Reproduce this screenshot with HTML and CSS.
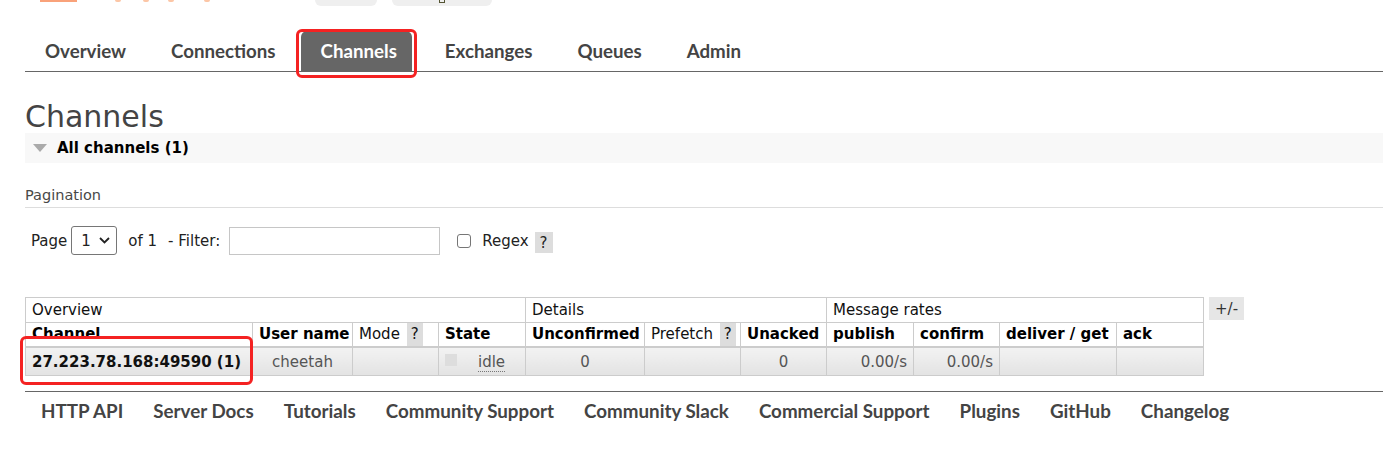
FILE: index.html
```html
<!DOCTYPE html>
<html>
<head>
<meta charset="utf-8">
<title>Channels</title>
<link rel="stylesheet" href="styles.css">
</head>
<body>
<div class="topstrip">
  <span class="logo-bit"></span>
  <span class="dot d1"></span>
  <span class="dot d2"></span>
  <span class="dot d3"></span>
  <span class="dot d4"></span>
  <span class="pill p1"></span>
  <span class="pill p2"><span class="glyph"></span></span>
</div>
<div class="page">
  <nav class="tabs">
    <a class="tab">Overview</a>
    <a class="tab">Connections</a>
    <span class="tab-wrap"><a class="tab active">Channels</a><span class="mark mark-tab"></span></span>
    <a class="tab">Exchanges</a>
    <a class="tab">Queues</a>
    <a class="tab">Admin</a>
  </nav>

  <h1>Channels</h1>

  <div class="section-bar"><span class="tri"></span><span class="section-title">All channels (1)</span></div>

  <div class="pag-label">Pagination</div>

  <div class="pag-row">
    <span class="lbl-page">Page</span>
    <span class="fake-select"><span class="sel-val">1</span><svg class="chev" width="11" height="7" viewBox="0 0 11 7"><path d="M1 1 L5.5 5.5 L10 1" fill="none" stroke="#222" stroke-width="1.8"/></svg></span>
    <span class="lbl-of">of 1</span>
    <span class="lbl-filter">- Filter:</span>
    <input class="filter" type="text">
    <span class="checkbox"></span>
    <span class="lbl-regex">Regex</span>
    <span class="help">?</span>
  </div>

  <div class="table-row">
    <div class="table-wrap">
      <table class="list">
        <colgroup>
          <col class="w-channel"><col class="w-user"><col class="w-mode"><col class="w-state">
          <col class="w-unconf"><col class="w-prefetch"><col class="w-unacked">
          <col class="w-publish"><col class="w-confirm"><col class="w-deliver"><col class="w-ack">
        </colgroup>
        <thead>
          <tr class="groups">
            <th colspan="4">Overview</th>
            <th colspan="3">Details</th>
            <th colspan="4">Message rates</th>
          </tr>
          <tr class="heads">
            <th>Channel</th>
            <th>User name</th>
            <th class="plain">Mode <span class="qhelp">?</span></th>
            <th>State</th>
            <th>Unconfirmed</th>
            <th class="plain">Prefetch <span class="qhelp">?</span></th>
            <th>Unacked</th>
            <th>publish</th>
            <th>confirm</th>
            <th>deliver / get</th>
            <th>ack</th>
          </tr>
        </thead>
        <tbody>
          <tr class="data">
            <td class="chan">27.223.78.168:49590 (1)</td>
            <td class="c">cheetah</td>
            <td></td>
            <td class="state"><span class="state-box"></span><span class="idle">idle</span></td>
            <td class="c">0</td>
            <td></td>
            <td class="c">0</td>
            <td class="r">0.00/s</td>
            <td class="r">0.00/s</td>
            <td></td>
            <td></td>
          </tr>
        </tbody>
      </table>
      <span class="mark mark-chan"></span>
    </div>
    <span class="plusminus">+/-</span>
  </div>

  <footer class="foot">
    <a>HTTP API</a>
    <a>Server Docs</a>
    <a>Tutorials</a>
    <a>Community Support</a>
    <a>Community Slack</a>
    <a>Commercial Support</a>
    <a>Plugins</a>
    <a>GitHub</a>
    <a>Changelog</a>
  </footer>
</div>
</body>
</html>
```

FILE: styles.css
```css
html, body {
  margin: 0;
  padding: 0;
  background: #fff;
}
body {
  font-family: "DejaVu Sans", Verdana, sans-serif;
  font-size: 15px;
  color: #333;
  overflow: hidden;
}

/* cut-off header strip */
.topstrip {
  display: flex;
  align-items: flex-start;
  height: 6px;
  overflow: hidden;
}
.logo-bit {
  margin-left: 40px;
  width: 37px;
  height: 2px;
  background: #f9a27a;
}
.dot {
  width: 6px;
  height: 2px;
  border-radius: 0 0 3px 3px;
  background: #fcc6a6;
}
.d1 { margin-left: 38px; }
.d2 { margin-left: 22px; }
.d3 { margin-left: 19px; }
.d4 { margin-left: 30px; }
.pill {
  height: 6px;
  background: #efefef;
  border-radius: 0 0 6px 6px;
}
.p1 { margin-left: 105px; width: 62px; }
.p2 { margin-left: 15px; width: 100px; position: relative; }
.glyph {
  position: absolute;
  left: 47px;
  top: 0;
  width: 4px;
  height: 2px;
  border: 1px solid #553;
  border-top: none;
}

.page {
  padding-left: 25px;
}

/* tabs */
.tabs {
  margin-top: 25px;
  display: flex;
  gap: 5px;
  height: 40px;
  border-bottom: 1px solid #666;
  font-family: Lato, "DejaVu Sans", sans-serif;
  font-weight: 700;
  font-size: 18.7px;
}
.tab {
  display: flex;
  align-items: center;
  padding: 0 20px;
  color: #444;
  text-decoration: none;
  border-radius: 6px 6px 0 0;
}
.tab-wrap {
  position: relative;
  display: flex;
}
.tab.active {
  background: #666;
  color: #fff;
  padding-right: 15px;
  margin-right: 8px;
}
.mark {
  position: absolute;
  border: 3px solid #f42222;
  border-radius: 6px;
  box-sizing: border-box;
  pointer-events: none;
}
.mark-tab {
  left: -5px;
  top: -2px;
  width: 121px;
  height: 49px;
}

h1 {
  margin: 28px 0 0;
  font-size: 30px;
  line-height: 33px;
  font-weight: normal;
  color: #444;
}

.section-bar {
  height: 30px;
  background: #f8f8f8;
  display: flex;
  align-items: center;
}
.tri {
  margin-left: 8px;
  width: 0;
  height: 0;
  border-left: 7px solid transparent;
  border-right: 7px solid transparent;
  border-top: 8px solid #aaa;
}
.section-title {
  margin-left: 10px;
  font-weight: bold;
  color: #000;
}

.pag-label {
  margin-top: 23px;
  line-height: 18px;
  padding-bottom: 3px;
  border-bottom: 1px solid #ddd;
  color: #484848;
  font-size: 14.5px;
}

.pag-row {
  margin-top: 18px;
  height: 29px;
  display: flex;
  align-items: center;
  color: #222;
}
.lbl-page { margin-left: 6px; }
.fake-select {
  margin-left: 4px;
  box-sizing: border-box;
  width: 46px;
  height: 29px;
  border: 1px solid #767676;
  border-radius: 3px;
  display: flex;
  align-items: center;
}
.sel-val { margin-left: 9px; }
.chev { margin-left: 8px; }
.lbl-of { margin-left: 11px; }
.lbl-filter { margin-left: 11px; }
.filter {
  margin: 0 0 0 9px;
  box-sizing: border-box;
  width: 211px;
  height: 28px;
  border: 1px solid #c6c6c6;
  padding: 0;
  font: inherit;
}
.checkbox {
  margin-left: 17px;
  box-sizing: border-box;
  width: 14px;
  height: 14px;
  border: 1px solid #767676;
  border-radius: 3px;
}
.lbl-regex { margin-left: 11px; }
.help {
  margin-left: 6px;
  width: 18px;
  height: 21px;
  background: #ddd;
  display: flex;
  align-items: center;
  justify-content: center;
  position: relative;
  top: 2px;
}

/* table */
.table-row {
  margin-top: 42px;
  display: flex;
  align-items: flex-start;
  gap: 5px;
}
.table-wrap {
  position: relative;
}
.list {
  border-collapse: collapse;
  table-layout: fixed;
  width: 1178px;
  font-size: 15px;
}
.w-channel { width: 227px; }
.w-user { width: 100px; }
.w-mode { width: 86px; }
.w-state { width: 87px; }
.w-unconf { width: 119px; }
.w-prefetch { width: 96px; }
.w-unacked { width: 86px; }
.w-publish { width: 87px; }
.w-confirm { width: 86px; }
.w-deliver { width: 117px; }
.w-ack { width: 87px; }

.list th, .list td {
  border: 1px solid #ccc;
  padding: 0 6px;
  text-align: left;
  white-space: nowrap;
  overflow: hidden;
}
.groups th {
  font-weight: normal;
  height: 23px;
  line-height: 23px;
  color: #111;
  padding-top: 1px;
}
.heads th {
  font-weight: bold;
  height: 23px;
  line-height: 23px;
  color: #000;
  border-bottom: 2px solid #ccc;
}
.heads th.plain {
  font-weight: normal;
  color: #111;
}
.qhelp {
  display: inline-block;
  background: #ddd;
  padding: 0 4px;
  margin-left: 2px;
  line-height: 23px;
}
.data td {
  height: 27px;
  background: linear-gradient(#f2f2f2, #e3e3e3);
  color: #555;
}
.data td.chan {
  font-weight: bold;
  color: #111;
}
.data td.c { text-align: center; }
.data td.r { text-align: right; }
.data td.state {
  padding-left: 6px;
}
.state-box {
  display: inline-block;
  width: 12px;
  height: 12px;
  background: #ddd;
  vertical-align: middle;
  position: relative;
  top: -2px;
}
.idle {
  margin-left: 21px;
  border-bottom: 1px dotted #777;
}
.mark-chan {
  left: -5px;
  top: 39px;
  width: 233px;
  height: 49px;
}
.plusminus {
  width: 35px;
  height: 23px;
  background: #e6e6e6;
  display: flex;
  align-items: center;
  justify-content: center;
  color: #333;
}

/* footer */
.foot {
  margin-top: 15px;
  border-top: 1px solid #666;
  padding: 8px 0 0 1px;
  display: flex;
  font-family: Lato, "DejaVu Sans", sans-serif;
  font-weight: 700;
  font-size: 18.8px;
  line-height: 22px;
}
.foot a {
  padding: 0 15px;
  color: #444;
}
```
